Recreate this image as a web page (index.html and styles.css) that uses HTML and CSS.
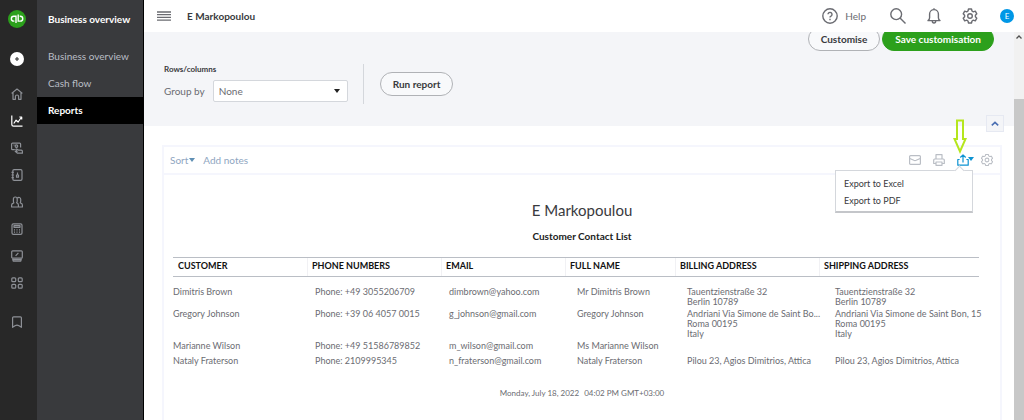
FILE: index.html
```html
<!DOCTYPE html>
<html lang="en">

<head>
    <meta charset="UTF-8">
    <meta name="viewport" content="width=device-width, initial-scale=1.0">
    <title>Customer Contact List</title>
    <link rel="stylesheet" href="styles.css">
</head>

<body>
    <!-- Icon rail -->
    <nav class="rail" aria-label="Main">
        <a class="logo" href="#" aria-label="Home page">
            <svg width="18" height="18" viewBox="0 0 18 18">
                <circle cx="9" cy="9" r="9" fill="#2ca01c" />
                <g fill="none" stroke="#fff" stroke-width="1.4">
                    <path d="M8 12.9V6.2H5.8a2.4 2.4 0 0 0 0 4.9h.6" />
                    <path d="M10.2 4.6v6.5h2.1a2.4 2.4 0 0 0 0-4.9h-.6" />
                </g>
            </svg>
        </a>
        <button class="plus" aria-label="New">
            <svg width="14" height="14" viewBox="0 0 14 14">
                <circle cx="7" cy="7" r="7" fill="#fff" />
                <path d="M7 5v4M5 7h4" stroke="#333" stroke-width="1.1" />
            </svg>
        </button>
        <a class="rail-item" href="#" aria-label="Dashboard">
            <svg class="icon" viewBox="0 0 12 12"><path d="M.6 5.4L6 1l5.4 4.4M2 4.5v6.8h2.4V8.6a1.6 1.6 0 0 1 3.2 0v2.7H10V4.5" /></svg>
        </a>
        <a class="rail-item active" href="#" aria-label="Business overview">
            <svg class="icon" viewBox="0 0 12 12"><path d="M.8.5v9q0 1.7 1.7 1.7h9M2.8 8.5l2.3-3.3 2 1.8 3.5-5M8.3 2h2.4v2.4" /></svg>
        </a>
        <a class="rail-item" href="#" aria-label="Sales">
            <svg class="icon" viewBox="0 0 12 12"><path d="M3.800 7.600H1.500a.9.9 0 0 1-.9-.9V2q0-.9.9-.9h7.200q.9 0 .9.900v3.500M2.500 3h1" /><circle cx="5.400" cy="4.100" r="1.300" /><path d="M4.200 9.300h2L4.800 7.600q.4-1 1.300-.4l1.200.9 2.900.1q1.200.2 1.200 1.200v1.800H6.500z" /></svg>
        </a>
        <a class="rail-item" href="#" aria-label="Expenses">
            <svg class="icon" viewBox="0 0 12 12"><rect x="1.8" y=".7" width="9.200" height="10.600" rx="1.300" /><path d="M.5 3.300h2.300M.5 6h2.300M.5 8.700h2.300" /><path d="M6.500 3.500v2M5.500 6h2v2.200h-2z" /></svg>
        </a>
        <a class="rail-item" href="#" aria-label="Employees">
            <svg class="icon" viewBox="0 0 12 12"><path d="M2.400 5V3a1.900 2 0 0 1 3.800 0v2q0 1.300-.6 1.800 1.800.6 1.800 2.200v2H.6V9q0-1.600 2.200-2.200Q2.400 6 2.400 5zM6.500 2a1.800 1.800 0 0 1 3.200 1.200v1.900q0 1.200-.5 1.700 2.200.5 2.200 2.200v2h-4" /></svg>
        </a>
        <a class="rail-item" href="#" aria-label="Accounting">
            <svg class="icon" viewBox="0 0 12 12"><rect x="1" y=".8" width="10" height="10.600" rx="1.400" /><path d="M3 2.700h6v1.600H3zM3 6.800h1M5.500 6.800h1M8 6.800h1M3 9.200h1M5.500 9.200h1M8 9.200h1" /></svg>
        </a>
        <a class="rail-item" href="#" aria-label="My accountant">
            <svg class="icon" viewBox="0 0 12 12"><rect x=".7" y=".8" width="10.600" height="7.400" rx="1" /><path d="M4.600 5.800l2.800-3M1.600 8.500l.6 2.600h7.600l.6-2.600M2 9.700h8" /></svg>
        </a>
        <a class="rail-item" href="#" aria-label="Apps">
            <svg class="icon" viewBox="0 0 12 12"><rect x=".8" y=".8" width="3.900" height="3.900" rx="1" /><rect x="7.300" y=".8" width="3.900" height="3.900" rx="1" /><rect x=".8" y="7.300" width="3.900" height="3.900" rx="1" /><rect x="7.300" y="7.300" width="3.900" height="3.900" rx="1" /></svg>
        </a>
        <a class="rail-item bookmark" href="#" aria-label="Bookmarks">
            <svg class="icon" viewBox="0 0 12 12"><path d="M1.600 11.300V1.800q0-1 1-1h6.800q1 0 1 1v9.500L8 9.700q-2-1-4 0z" /></svg>
        </a>
    </nav>

    <!-- Sub menu -->
    <nav class="subnav" aria-label="Business overview">
        <h2>Business overview</h2>
        <a href="#">Business overview</a>
        <a href="#">Cash flow</a>
        <a class="current" href="#">Reports</a>
    </nav>

    <div class="page">
        <header class="topbar">
            <button class="menu-btn" aria-label="Toggle menu">
                <svg width="14" height="10" viewBox="0 0 14 10"><path d="M0 1h14M0 3.700h14M0 6.400h14M0 9.100h14" stroke="#6b6c72" stroke-width="1.300" /></svg>
            </button>
            <span class="company">E Markopoulou</span>
            <button class="help">
                <svg class="top-icon" viewBox="0 0 16 16"><circle cx="8" cy="8" r="7.200" /><path d="M6 6.300a2 2 0 1 1 3 1.800q-1 .5-1 1.300M8 10.800v1.400" /></svg>
                Help
            </button>
            <button aria-label="Search">
                <svg class="top-icon" viewBox="0 0 16 16"><circle cx="6.200" cy="6.200" r="5.400" /><path d="M10 10l5.500 5.500" /></svg>
            </button>
            <button aria-label="Notifications">
                <svg class="top-icon" viewBox="0 0 16 16"><path d="M8 .2v1.500M2 12.600h12q-1.600-1-1.600-2.800V6a4.400 4.400 0 0 0-8.800 0v3.800Q3.600 11.600 2 12.600zM6.300 13a1.700 2 0 0 0 3.400 0" /></svg>
            </button>
            <button aria-label="Settings">
                <svg class="top-icon" viewBox="0 0 16 16"><path d="M6.500 1h3l.5 2 1.300.8 2-.6 1.500 2.600L13.400 7.300v1.400l1.400 1.500-1.500 2.600-2-.6-1.300.8-.5 2h-3l-.5-2-1.300-.8-2 .6-1.500-2.600 1.400-1.500V7.300L1.200 5.800l1.500-2.600 2 .6L6 3z" /><circle cx="8" cy="8" r="2.300" /></svg>
            </button>
            <button class="avatar" aria-label="Account">E</button>
        </header>

        <div class="view">
            <main class="content">
                <!-- Report filters -->
                <section class="filters">
                    <div class="actions">
                        <button class="btn">Customise</button>
                        <button class="btn btn-primary">Save customisation</button>
                    </div>
                    <div class="filter-row">
                        <div class="group">
                            <h3>Rows/columns</h3>
                            <div class="field">
                                <label for="group-by">Group by</label>
                                <span class="select">
                                    <select id="group-by">
                                        <option>None</option>
                                        <option>Customer</option>
                                    </select>
                                </span>
                            </div>
                        </div>
                        <button class="btn run">Run report</button>
                    </div>
                    <button class="collapse" aria-label="Collapse filters">
                        <svg width="8" height="5" viewBox="0 0 8 5"><path d="M.8 4.300L4 1.300l3.200 3" fill="none" stroke="#4a6fb3" stroke-width="1.600" /></svg>
                    </button>
                </section>

                <!-- Report -->
                <section class="report">
                    <div class="toolbar">
                        <button class="link sort">Sort</button>
                        <button class="link">Add notes</button>
                        <div class="tools">
                            <button aria-label="Email">
                                <svg class="tool-icon" viewBox="0 0 12 12"><rect x=".6" y="1.600" width="10.800" height="8.800" rx="1" /><path d="M.8 4.500l4 1.800q1.200.5 2.400 0l4-1.800" /></svg>
                            </button>
                            <button aria-label="Print">
                                <svg class="tool-icon" viewBox="0 0 12 12"><path d="M3 5V.7h6V5M3 9.500H.7V6q0-1 1-1h8.600q1 0 1 1v3.500H9M3 8h6v3.300H3z" /></svg>
                            </button>
                            <div class="export">
                                <button class="export-btn" aria-label="Export" aria-expanded="true">
                                    <svg class="tool-icon" viewBox="0 0 12 12"><path d="M2.600 5.500H.8v5.700h10.400V5.500H9.400M6 8.500V1M3.300 3.500L6 .9l2.700 2.600" /></svg>
                                </button>
                                <svg class="pointer" width="14" height="36" viewBox="0 0 14 36"><path d="M4 1.500h6v18.500h2.500L7 32.500 1.500 20H4z" /></svg>
                                <div class="menu">
                                    <button>Export to Excel</button>
                                    <button>Export to PDF</button>
                                </div>
                            </div>
                            <button aria-label="Report settings">
                                <svg class="tool-icon" viewBox="1 1 14 14"><path d="M6.500 1.500h3l.5 1.700 1.300.8 1.800-.5 1.400 2.500L13.200 7.300v1.400l1.300 1.300-1.400 2.500-1.800-.5-1.300.8-.5 1.700h-3L6 12.800 4.700 12l-1.800.5L1.500 10l1.300-1.300V7.300L1.500 6l1.400-2.500 1.800.5L6 3.200z" /><circle cx="8" cy="8" r="2.200" /></svg>
                            </button>
                        </div>
                    </div>

                    <h1>E Markopoulou</h1>
                    <p class="report-name">Customer Contact List</p>

                    <table>
                        <colgroup>
                            <col class="col-customer">
                            <col class="col-phone">
                            <col class="col-email">
                            <col class="col-name">
                            <col class="col-billing">
                            <col>
                        </colgroup>
                        <thead>
                            <tr>
                                <th>CUSTOMER</th>
                                <th>PHONE NUMBERS</th>
                                <th>EMAIL</th>
                                <th>FULL NAME</th>
                                <th>BILLING ADDRESS</th>
                                <th>SHIPPING ADDRESS</th>
                            </tr>
                        </thead>
                        <tbody>
                            <tr>
                                <td>Dimitris Brown</td>
                                <td>Phone: +49 3055206709</td>
                                <td>dimbrown@yahoo.com</td>
                                <td>Mr Dimitris Brown</td>
                                <td>Tauentzienstraße 32<br>Berlin 10789</td>
                                <td>Tauentzienstraße 32<br>Berlin 10789</td>
                            </tr>
                            <tr>
                                <td>Gregory Johnson</td>
                                <td>Phone: +39 06 4057 0015</td>
                                <td>g_johnson@gmail.com</td>
                                <td>Gregory Johnson</td>
                                <td>Andriani Via Simone de Saint Bo...<br>Roma 00195<br>Italy</td>
                                <td>Andriani Via Simone de Saint Bon, 15<br>Roma 00195<br>Italy</td>
                            </tr>
                            <tr>
                                <td>Marianne Wilson</td>
                                <td>Phone: +49 51586789852</td>
                                <td>m_wilson@gmail.com</td>
                                <td>Ms Marianne Wilson</td>
                                <td></td>
                                <td></td>
                            </tr>
                            <tr>
                                <td>Nataly Fraterson</td>
                                <td>Phone: 2109995345</td>
                                <td>n_fraterson@gmail.com</td>
                                <td>Nataly Fraterson</td>
                                <td>Pilou 23, Agios Dimitrios, Attica</td>
                                <td>Pilou 23, Agios Dimitrios, Attica</td>
                            </tr>
                        </tbody>
                    </table>

                    <p class="timestamp"><span>Monday, July 18, 2022</span><span>04:02 PM GMT+03:00</span></p>
                </section>
            </main>

            <div class="scrollbar">
                <svg width="6" height="4" viewBox="0 0 6 4"><path d="M.5 3.500L3 1l2.500 2.500" fill="none" stroke="#505050" stroke-width="1.300" /></svg>
                <div class="thumb"></div>
            </div>
        </div>
    </div>
</body>

</html>
```
FILE: styles.css
```css
* {
    box-sizing: border-box;
}

body {
    display: flex;
    height: 100vh;
    margin: 0;
    overflow: hidden;
    background: #fff;
    color: #6b6c72;
    font-family: Lato, "Liberation Sans", sans-serif;
    font-size: 10px;
}

button,
select {
    font: inherit;
    color: inherit;
}

button {
    display: flex;
    align-items: center;
    padding: 0;
    border: none;
    background: none;
    cursor: pointer;
}

a {
    text-decoration: none;
}

h1,
h2,
h3,
p {
    margin: 0;
}

svg {
    display: block;
}

/* Icon rail */
.rail {
    display: flex;
    flex-direction: column;
    align-items: center;
    flex: none;
    width: 37px;
    padding: 10px 4px 0 0;
    background: #282828;
}

.plus {
    margin: 24px 0 14px;
}

.rail-item {
    display: flex;
    align-items: center;
    height: 27px;
    color: #8d9096;
}

.rail-item.active {
    color: #fff;
}

.rail-item.bookmark {
    margin-top: 12px;
}

.icon,
.top-icon,
.tool-icon {
    width: 12px;
    height: 12px;
    fill: none;
    stroke: currentColor;
    stroke-width: 1.2;
    stroke-linejoin: round;
}

/* Sub menu */
.subnav {
    flex: none;
    width: 107px;
    border-right: 1px solid #000;
    background: #393a3d;
}

.subnav h2 {
    margin-bottom: 4px;
    padding-left: 11px;
    color: #fff;
    font-size: 10px;
    line-height: 39px;
    white-space: nowrap;
}

.subnav a {
    display: block;
    padding-left: 11px;
    color: #babec5;
    line-height: 27px;
    white-space: nowrap;
}

.subnav .current {
    background: #000;
    color: #fff;
    font-weight: bold;
}

/* Top bar */
.page {
    display: flex;
    flex-direction: column;
    flex: 1;
    min-width: 0;
}

.topbar {
    display: flex;
    align-items: center;
    flex: none;
    gap: 20px;
    height: 32px;
    padding: 0 10px 0 13px;
}

.company {
    margin: 0 auto 0 -4px;
    color: #393a3d;
    font-weight: bold;
}

.top-icon {
    width: 16px;
    height: 16px;
    stroke-width: 1.4;
}

.help {
    gap: 7px;
    margin-right: 4px;
}

.avatar {
    justify-content: center;
    width: 14px;
    height: 14px;
    margin-left: 2px;
    border-radius: 50%;
    background: #0097e6;
    color: #fff;
    font-size: 8px;
}

/* Scrolling area */
.view {
    display: flex;
    flex: 1;
    min-height: 0;
}

.content {
    flex: 1;
    min-width: 0;
    overflow: hidden;
}

.scrollbar {
    display: flex;
    flex-direction: column;
    align-items: center;
    flex: none;
    width: 10px;
    padding-top: 3px;
    background: #f1f1f1;
}

.thumb {
    flex: 1;
    width: 100%;
    margin-top: 60px;
    background: #c8c8c8;
}

/* Filters */
.filters {
    position: relative;
    display: flow-root;
    height: 94px;
    padding: 0 20px;
    background: #f4f5f8;
}

.btn {
    justify-content: center;
    height: 24px;
    padding: 0 12px;
    border: 1px solid #b0b2b6;
    border-radius: 12px;
    background: #f8f9fb;
    color: #393a3d;
    font-weight: bold;
}

.btn-primary {
    border-color: #2ca01c;
    background: #2ca01c;
    color: #fff;
}

.actions {
    display: flex;
    justify-content: flex-end;
    gap: 2px;
    margin-top: -5px;
}

.filter-row {
    display: flex;
    align-items: center;
    padding-top: 13px;
}

.group {
    height: 40px;
    padding-right: 15px;
    border-right: 1px solid #d4d7dc;
}

.group h3 {
    color: #393a3d;
    font-size: 8px;
    line-height: 10px;
}

.field {
    display: flex;
    align-items: center;
    gap: 8px;
    margin-top: 6px;
}

.select {
    position: relative;
}

.select select {
    display: block;
    appearance: none;
    width: 135px;
    height: 22px;
    padding: 0 5px;
    border: 1px solid #d4d7dc;
    border-radius: 2px;
    background: #fff;
}

.select::after,
.sort::after {
    border: 3px solid transparent;
    border-top: 4px solid #222;
    border-bottom: none;
    content: "";
}

.select::after {
    position: absolute;
    top: 9px;
    right: 8px;
    pointer-events: none;
}

.run {
    margin-left: 16px;
}

.collapse {
    position: absolute;
    right: 10px;
    bottom: -6px;
    justify-content: center;
    width: 18px;
    height: 17px;
    border: 1px solid #e6e9f2;
    background: #f4f5f8;
}

/* Report */
.report {
    height: 100%;
    margin: 19px 12px 0 18px;
    border: 2px solid #f5f6fd;
}

.toolbar {
    display: flex;
    align-items: center;
    gap: 8px;
    height: 28px;
    padding: 0 7px 0 6px;
    border-bottom: 2px solid #f5f6fd;
}

.link {
    gap: 1px;
    color: #8fa6bf;
}

.sort::after {
    border-top-color: #5f8fb4;
}

.tools {
    display: flex;
    align-items: center;
    gap: 12px;
    margin-left: auto;
    color: #babec5;
}

.export {
    position: relative;
    color: #0d93d2;
}

.export-btn {
    margin-right: -5px;
}

.export-btn::after {
    margin: -3px 0 0 -1px;
    border: 3px solid transparent;
    border-top: 4px solid #0d93d2;
    border-bottom: none;
    content: "";
}

.pointer {
    position: absolute;
    right: 2px;
    bottom: 11px;
    fill: none;
    stroke: #b5e61d;
    stroke-width: 2;
}

.menu {
    position: absolute;
    top: 16px;
    right: -4px;
    width: 138px;
    padding: 4px 0 2px;
    border: 1px solid #d4d7dc;
    border-bottom: 2px solid #c4c6ca;
    background: #fff;
    color: #393a3d;
    font-size: 9px;
}

.menu::before {
    position: absolute;
    top: -4px;
    right: 9px;
    width: 6px;
    height: 6px;
    border: solid #d4d7dc;
    border-width: 1px 0 0 1px;
    background: #fff;
    content: "";
    transform: rotate(45deg);
}

.menu button {
    width: 100%;
    height: 17px;
    padding-left: 8px;
}

h1 {
    margin-top: 25px;
    color: #393a3d;
    font-size: 15px;
    font-weight: normal;
    line-height: 20px;
    text-align: center;
}

.report-name {
    margin-top: 9px;
    color: #222;
    font-weight: bold;
    line-height: 14px;
    text-align: center;
}

table {
    width: calc(100% - 30px);
    margin: 14px 0 0 9px;
    border-collapse: separate;
    border-spacing: 0;
    table-layout: fixed;
    font-size: 9px;
}

.col-customer,
.col-phone {
    width: 134px;
}

.col-email {
    width: 124px;
}

.col-name {
    width: 110px;
}

.col-billing {
    width: 144px;
}

th {
    height: 20px;
    padding: 0 5px 2px;
    border-top: 1px solid #babec5;
    border-bottom: 1px solid #babec5;
    color: #111;
    line-height: 10px;
    text-align: left;
}

th + th {
    box-shadow: inset 1px 0 #f1f1f4;
}

td {
    height: 15px;
    padding: 1px 0;
    line-height: 10px;
    vertical-align: top;
    white-space: nowrap;
}

td:nth-child(2),
td:nth-child(3) {
    padding-left: 8px;
}

td:nth-child(4),
td:nth-child(5) {
    padding-left: 12px;
}

td:nth-child(6) {
    padding-left: 16px;
}

tbody tr:first-child td {
    padding-top: 10px;
}

.timestamp {
    display: flex;
    justify-content: center;
    gap: 5px;
    margin-top: 18px;
    font-size: 8px;
    line-height: 10px;
}
```
